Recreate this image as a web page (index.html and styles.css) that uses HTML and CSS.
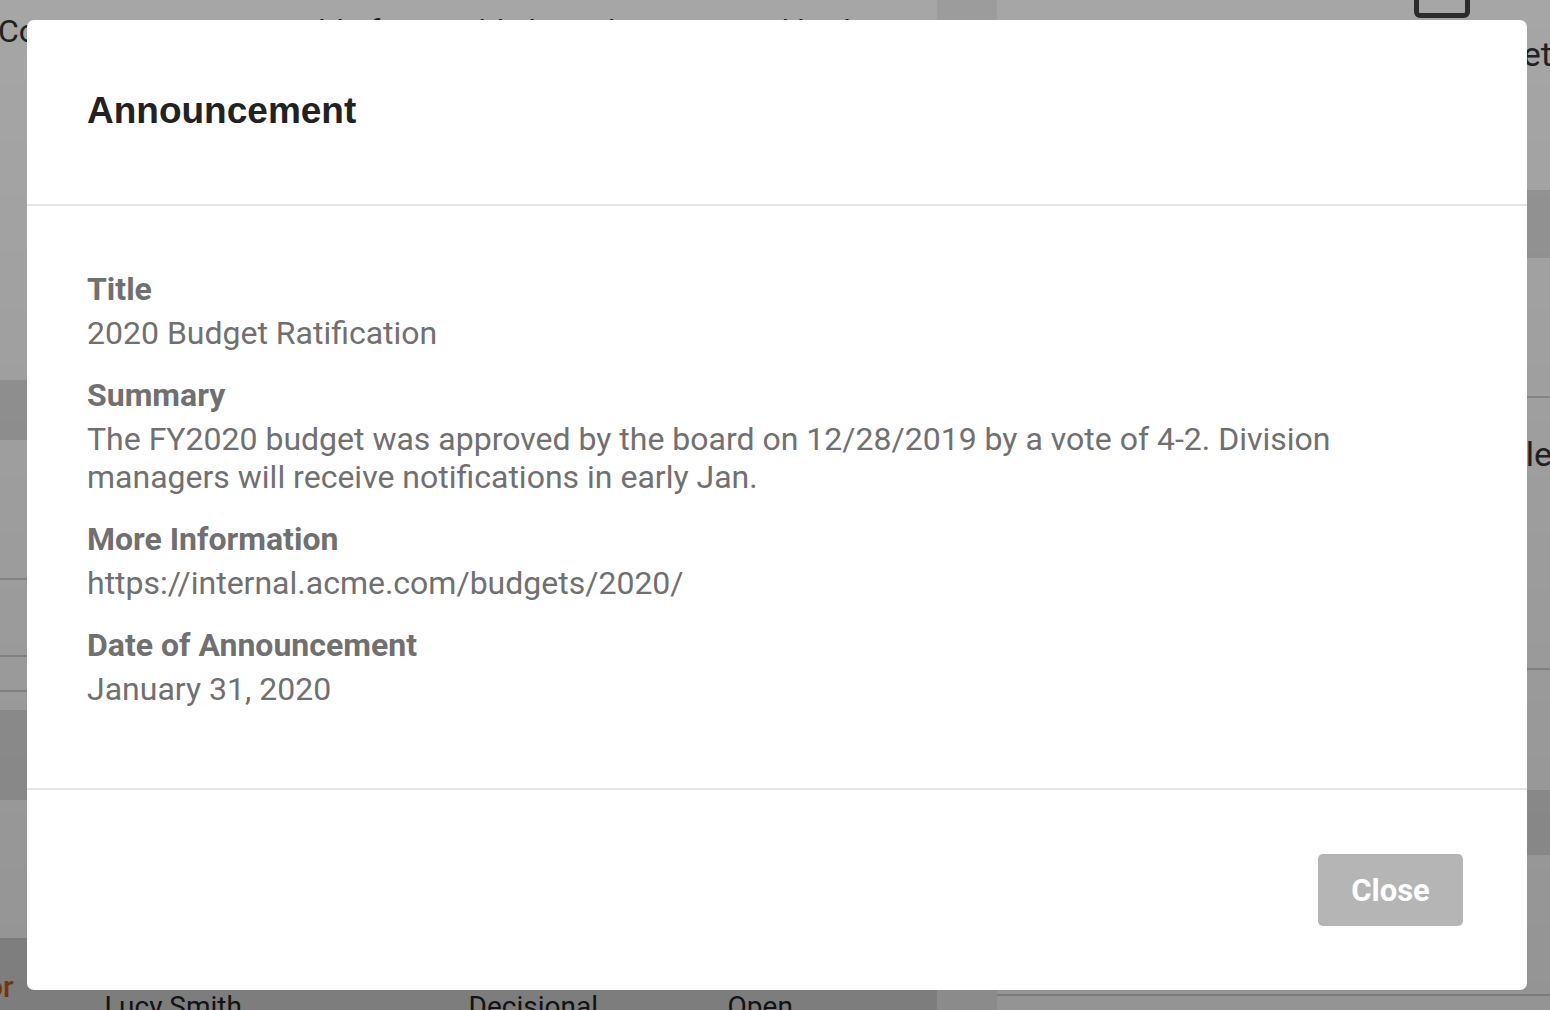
FILE: index.html
```html
<!DOCTYPE html>
<html lang="en">
<head>
    <meta charset="UTF-8">
    <meta name="viewport" content="width=device-width, initial-scale=1.0">
    <title>Announcement</title>
    <link rel="stylesheet" href="styles.css">
</head>
<body>
    <div class="page">
        <main class="main">
            <p class="intro">Committee is responsible for establishing the municipal budget</p>
            <div class="band band-a"></div>
            <div class="row row-a"></div>
            <div class="row row-b"></div>
            <div class="row row-c"></div>
            <div class="band band-b"></div>
            <div class="row row-d"></div>
            <div class="table-row">
                <span class="cell role">Director</span>
                <span class="cell name">Lucy Smith</span>
                <span class="cell kind">Decisional</span>
                <span class="cell state">Open</span>
            </div>
        </main>
        <div class="gutter"></div>
        <aside class="side">
            <div class="side-top"><span class="toggle"></span></div>
            <p class="side-text">Budget</p>
            <div class="band side-band-a"></div>
            <div class="row side-row-a"></div>
            <p class="side-text side-text-b">Schedule</p>
            <div class="row side-row-b"></div>
            <div class="band side-band-b"></div>
            <div class="row side-row-c"></div>
        </aside>
    </div>

    <div class="backdrop"></div>

    <div class="modal">
        <header class="modal-header">
            <h1>Announcement</h1>
        </header>
        <section class="modal-body">
            <div class="field">
                <h2>Title</h2>
                <p>2020 Budget Ratification</p>
            </div>
            <div class="field">
                <h2>Summary</h2>
                <p>The FY2020 budget was approved by the board on 12/28/2019 by a vote of 4-2. Division managers will receive notifications in early Jan.</p>
            </div>
            <div class="field">
                <h2>More Information</h2>
                <p>https://internal.acme.com/budgets/2020/</p>
            </div>
            <div class="field">
                <h2>Date of Announcement</h2>
                <p>January 31, 2020</p>
            </div>
        </section>
        <footer class="modal-footer">
            <button type="button" class="btn-close">Close</button>
        </footer>
    </div>
</body>
</html>
```

FILE: styles.css
```css
html, body { margin: 0; padding: 0; height: 100%; overflow: hidden; }
body { font-family: Roboto, "Liberation Sans", Arial, sans-serif; background: #fff; }

/* page behind the dialog */
.page { display: flex; height: 1010px; overflow: hidden; }
.main { width: 937px; flex-shrink: 0; display: flex; flex-direction: column; background: #fff; overflow: hidden; }
.gutter { width: 60px; flex-shrink: 0; background: #f0f0f0; }
.side { flex: 1; min-width: 0; display: flex; flex-direction: column; background: #fff; overflow: hidden; }

.intro { margin: 12px 0 0 -2px; font-size: 32px; line-height: 38px; color: #333; white-space: nowrap; }
.band { background: #e4e4e4; flex-shrink: 0; }
.row { border-bottom: 2px solid #d4d4d4; flex-shrink: 0; }
.band-a { height: 60px; margin-top: 330px; }
.row-a { height: 138px; }
.row-b { height: 75px; }
.row-c { height: 33px; }
.band-b { height: 90px; margin-top: 18px; }
.row-d { height: 138px; }
.table-row { display: flex; align-items: flex-start; height: 70px; flex-shrink: 0; background: #d8d8d8; font-size: 28px; color: #222; padding-top: 50px; }
.cell { display: block; white-space: nowrap; flex-shrink: 0; }
.role { margin: -21px 91px 0 -93px; font-size: 30px; font-weight: 500; color: #c06010; }
.name { width: 364px; }
.kind { width: 259px; }

.side-top { height: 14px; padding-left: 417px; flex-shrink: 0; }
.toggle { display: block; width: 46px; height: 22px; margin-top: -14px; border: 5px solid #444; border-radius: 6px; }
.side-text { margin: 20px -2px 0 0; font-size: 34px; line-height: 40px; color: #333; text-align: right; white-space: nowrap; flex-shrink: 0; }
.side-band-a { height: 68px; margin-top: 116px; }
.side-row-a { height: 138px; }
.side-text-b { margin-top: 36px; }
.side-row-b { height: 194px; }
.side-band-b { height: 65px; margin-top: 120px; }
.side-row-c { height: 139px; }

.backdrop { position: fixed; inset: 0; background: linear-gradient(to bottom, rgba(0, 0, 0, 0.35), rgba(0, 0, 0, 0.42)); }

/* dialog */
.modal { position: fixed; left: 27px; top: 20px; width: 1500px; height: 970px; background: #fff; border-radius: 7px; display: flex; flex-direction: column; }
.modal-header { height: 184px; display: flex; align-items: center; padding: 0 60px; border-bottom: 2px solid #e6e6e6; }
.modal-header h1 { margin: 0 0 2px; font-family: "Liberation Sans", Arial, sans-serif; font-size: 37px; font-weight: bold; color: #222; }
.modal-body { height: 584px; padding: 64px 60px 0; box-sizing: border-box; border-bottom: 2px solid #e6e6e6; color: #707070; }
.field { margin-bottom: 24px; }
.field h2 { margin: 0 0 6px; font-size: 32px; line-height: 38px; font-weight: bold; }
.field p { margin: 0; font-size: 32px; line-height: 38px; }
.modal-footer { flex: 1; display: flex; align-items: center; justify-content: flex-end; padding: 0 64px; }
.btn-close { width: 145px; height: 72px; border: none; border-radius: 5px; background: #b5b5b5; color: #fff; font-family: Roboto, sans-serif; font-size: 31px; font-weight: bold; cursor: pointer; }
```
